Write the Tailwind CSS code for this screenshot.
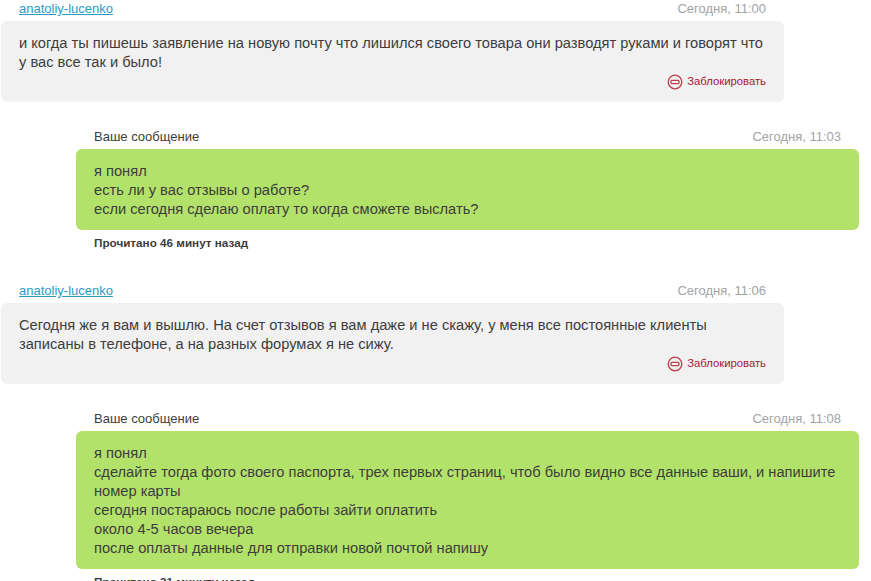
<!DOCTYPE html>
<html lang="en">
  <head>
    <meta charset="UTF-8" />
    <title>Сообщения</title>
    <script src="https://cdn.jsdelivr.net/npm/@tailwindcss/browser@4"></script>
  </head>
  <body class="h-[581px] overflow-hidden bg-white font-['Liberation_Sans',Arial,sans-serif] text-[#3d3d3d]">
    <div class="-mt-[1px] flex flex-col pl-[1px]">
      <!-- incoming -->
      <div class="w-[783px]">
        <div class="flex h-[22px] items-center justify-between px-[18px] pb-[2px] text-[13px]">
          <a href="#" class="text-[#2b9cc4] underline">anatoliy-lucenko</a>
          <span class="text-[#a3a3a3]">Сегодня, 11:00</span>
        </div>
        <div class="h-[81px] rounded-md bg-[#f1f1f1] px-[18px] pt-[13px] text-[14.67px] leading-[19px]">
          <p>и когда ты пишешь заявление на новую почту что лишился своего товара они разводят руками и говорят что<br />у вас все так и было!</p>
          <div class="flex items-center justify-end gap-[4px] text-[11.3px] text-[#a5202c]">
            <svg class="h-4 w-4" viewBox="0 0 16 16" fill="none" stroke="#c0414d" stroke-width="1.3"><circle cx="8" cy="8" r="6.8" /><rect x="4" y="6.4" width="8" height="3.2" rx="1" /></svg>
            <span>Заблокировать</span>
          </div>
        </div>
      </div>

      <!-- outgoing -->
      <div class="ml-[75px] mt-[25px] w-[783px]">
        <div class="flex h-[22px] items-center justify-between px-[18px] pb-[2px] text-[13px]">
          <span>Ваше сообщение</span>
          <span class="text-[#a3a3a3]">Сегодня, 11:03</span>
        </div>
        <div class="h-[81px] rounded-md bg-[#b3e26a] px-[18px] pt-[13px] text-[14.67px] leading-[19px]">
          <p>я понял<br />есть ли у вас отзывы о работе?<br />если сегодня сделаю оплату то когда сможете выслать?</p>
        </div>
        <p class="mt-[6px] px-[18px] text-[11.7px] leading-[14px] font-bold">Прочитано 46 минут назад</p>
      </div>

      <!-- incoming -->
      <div class="mt-[31px] w-[783px]">
        <div class="flex h-[22px] items-center justify-between px-[18px] pb-[2px] text-[13px]">
          <a href="#" class="text-[#2b9cc4] underline">anatoliy-lucenko</a>
          <span class="text-[#a3a3a3]">Сегодня, 11:06</span>
        </div>
        <div class="h-[81px] rounded-md bg-[#f1f1f1] px-[18px] pt-[13px] text-[14.67px] leading-[19px]">
          <p>Сегодня же я вам и вышлю. На счет отзывов я вам даже и не скажу, у меня все постоянные клиенты<br />записаны в телефоне, а на разных форумах я не сижу.</p>
          <div class="flex items-center justify-end gap-[4px] text-[11.3px] text-[#a5202c]">
            <svg class="h-4 w-4" viewBox="0 0 16 16" fill="none" stroke="#c0414d" stroke-width="1.3"><circle cx="8" cy="8" r="6.8" /><rect x="4" y="6.4" width="8" height="3.2" rx="1" /></svg>
            <span>Заблокировать</span>
          </div>
        </div>
      </div>

      <!-- outgoing -->
      <div class="ml-[75px] mt-[25px] w-[783px]">
        <div class="flex h-[22px] items-center justify-between px-[18px] pb-[2px] text-[13px]">
          <span>Ваше сообщение</span>
          <span class="text-[#a3a3a3]">Сегодня, 11:08</span>
        </div>
        <div class="h-[138px] rounded-md bg-[#b3e26a] px-[18px] pt-[13px] text-[14.67px] leading-[19px]">
          <p>я понял<br />сделайте тогда фото своего паспорта, трех первых страниц, чтоб было видно все данные ваши, и напишите<br />номер карты<br />сегодня постараюсь после работы зайти оплатить<br />около 4-5 часов вечера<br />после оплаты данные для отправки новой почтой напишу</p>
        </div>
        <p class="mt-[6px] px-[18px] text-[11.7px] leading-[14px] font-bold">Прочитано 31 минуту назад</p>
      </div>
    </div>
  </body>
</html>
